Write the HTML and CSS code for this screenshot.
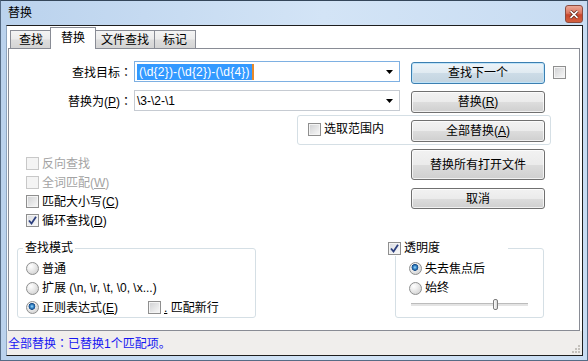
FILE: index.html
```html
<!DOCTYPE html>
<html>
<head>
  <meta charset="utf-8">
  <link rel="stylesheet" href="styles.css">
</head>
<body>
  <div class="window">
    <div class="titlebar">
      <span class="title">替换</span>
      <span class="close">
        <svg width="10" height="9" viewBox="0 0 10 9">
          <path d="M1.5 1.2 L8.5 7.8 M8.5 1.2 L1.5 7.8" stroke="#5c2418" stroke-width="3.2" fill="none"/>
          <path d="M1.5 1.2 L8.5 7.8 M8.5 1.2 L1.5 7.8" stroke="#fff" stroke-width="1.6" fill="none"/>
        </svg>
      </span>
    </div>

    <div class="client">
      <div class="tabs">
        <span class="tab">查找</span>
        <span class="tab active">替换</span>
        <span class="tab wide">文件查找</span>
        <span class="tab">标记</span>
      </div>

      <div class="panel">
        <div class="row">
          <span class="field-label">查找目标<span class="colon">：</span></span>
          <div class="combo focus">
            <span class="combo-text"><span class="sel">(\d{2})-(\d{2})-(\d{4})</span><span class="caret"></span></span>
            <svg class="arrow" width="7" height="4" viewBox="0 0 7 4"><path d="M0 0 H7 L3.5 4 Z" fill="#000"/></svg>
          </div>
          <button class="btn default">查找下一个</button>
          <span class="check"></span>
        </div>

        <div class="row">
          <span class="field-label">替换为(<u>P</u>)<span class="colon">：</span></span>
          <div class="combo">
            <span class="combo-text">\3-\2-\1</span>
            <svg class="arrow" width="7" height="4" viewBox="0 0 7 4"><path d="M0 0 H7 L3.5 4 Z" fill="#000"/></svg>
          </div>
          <button class="btn">替换(<u>R</u>)</button>
        </div>

        <div class="scope">
          <div class="option"><span class="check"></span>选取范围内</div>
          <button class="btn">全部替换(<u>A</u>)</button>
        </div>

        <div class="middle">
          <div class="options">
            <div class="option disabled"><span class="check"></span>反向查找</div>
            <div class="option disabled"><span class="check"></span>全词匹配(<u>W</u>)</div>
            <div class="option"><span class="check"></span>匹配大小写(<u>C</u>)</div>
            <div class="option"><span class="check on"><svg width="11" height="11" viewBox="0 0 11 11"><path d="M2 5.5 L4.5 8.5 L9 1.8" stroke="#2c3f7e" stroke-width="1.8" fill="none"/></svg></span>循环查找(<u>D</u>)</div>
          </div>
          <div class="actions">
            <button class="btn tall">替换所有打开文件</button>
            <button class="btn cancel">取消</button>
          </div>
        </div>

        <div class="groups">
          <fieldset class="group mode">
            <legend>查找模式</legend>
            <div class="option"><span class="radio"></span>普通</div>
            <div class="option wide-row"><span class="radio"></span>扩展 (\n, \r, \t, \0, \x...)</div>
            <div class="option"><span class="radio on"></span><span class="regex">正则表达式(<u>E</u>)</span><span class="check"></span><u>.</u>&nbsp;匹配新行</div>
          </fieldset>

          <fieldset class="group opacity">
            <legend><span class="check on"><svg width="11" height="11" viewBox="0 0 11 11"><path d="M2 5.5 L4.5 8.5 L9 1.8" stroke="#2c3f7e" stroke-width="1.8" fill="none"/></svg></span>透明度</legend>
            <div class="option"><span class="radio on"></span>失去焦点后</div>
            <div class="option wide-row"><span class="radio"></span>始终</div>
            <div class="slider"><span class="thumb"></span></div>
          </fieldset>
        </div>
      </div>

      <div class="statusbar">
        <span>全部替换<span class="colon">：</span>已替换1个匹配项。</span>
        <svg class="grip" width="9" height="9" viewBox="0 0 9 9">
          <rect x="7" y="1" width="2" height="2" fill="#c4c1bc"/>
          <rect x="4" y="4" width="2" height="2" fill="#c4c1bc"/>
          <rect x="7" y="4" width="2" height="2" fill="#c4c1bc"/>
          <rect x="1" y="7" width="2" height="2" fill="#c4c1bc"/>
          <rect x="4" y="7" width="2" height="2" fill="#c4c1bc"/>
          <rect x="7" y="7" width="2" height="2" fill="#c4c1bc"/>
        </svg>
      </div>
    </div>
  </div>
</body>
</html>
```

FILE: styles.css
```css
* {
  box-sizing: border-box;
}

body {
  margin: 0;
  font-family: "Liberation Sans", "Noto Sans CJK SC", sans-serif;
  font-size: 12px;
  line-height: 16px;
  color: #000;
}

u {
  text-decoration: underline;
}

.colon {
  font-family: "Noto Sans CJK JP", sans-serif;
}

.window {
  width: 588px;
  height: 361px;
  border: 1px solid #566c86;
  border-top-color: #34465a;
  background: linear-gradient(to right, #bad2ed, #d3e4f6 55%, #c8dcf2);
  display: flex;
  flex-direction: column;
}

.titlebar {
  height: 24px;
  display: flex;
  align-items: center;
  padding-left: 7px;
}

.title {
  flex: 1;
}

.close {
  align-self: flex-start;
  margin-top: 4px;
  margin-right: 4px;
  width: 18px;
  height: 18px;
  border: 1px solid #8b4c40;
  border-radius: 3px;
  background: linear-gradient(#eba897, #dc765f 45%, #c8462c 55%, #d3603f);
  display: flex;
  align-items: center;
  justify-content: center;
}

.client {
  margin: 0 4px 0 5px;
  height: 331px;
  border: 1px solid #1e1e1e;
  border-left-color: #8ea5bf;
  background: #fff;
  display: flex;
  flex-direction: column;
}

/* tabs */
.tabs {
  height: 22px;
  display: flex;
  align-items: flex-end;
  padding-left: 3px;
}

.tab {
  height: 18px;
  padding: 0 8px;
  margin-left: -1px;
  border: 1px solid #898c95;
  border-bottom: 0;
  background: linear-gradient(#f4f4f4, #ececec 45%, #dddddd 55%, #d4d4d4);
  display: flex;
  align-items: center;
}

.tab:first-child {
  margin-left: 0;
}

.tab.wide {
  padding: 0 5px;
}

.tab.active {
  position: relative;
  height: 22px;
  margin-bottom: -1px;
  margin-left: -2px;
  padding: 0 10px 2px;
  background: #fff;
}

.panel {
  margin-left: 1px;
  width: 572px;
  height: 283px;
  border: 1px solid #898c95;
  display: flex;
  flex-direction: column;
}

/* top rows */
.row {
  display: flex;
  align-items: flex-start;
  margin-top: 12px;
}

.row + .row {
  margin-top: 6px;
}

.field-label {
  width: 123px;
  text-align: right;
  line-height: 21px;
}

.combo {
  margin-left: 2px;
  width: 266px;
  height: 21px;
  border: 1px solid #c6cbd2;
  display: flex;
  align-items: center;
  padding: 0 6px 0 2px;
}

.combo.focus {
  border-color: #7eb0e2;
}

.combo-text {
  flex: 1;
  display: flex;
  align-items: center;
}

.sel {
  background: #3399ff;
  color: #fff;
  padding: 0 2px;
  letter-spacing: 0.2px;
}

.caret {
  width: 2px;
  height: 16px;
  background: #e8892a;
}

.btn {
  font: inherit;
  color: #000;
  margin: 1px 0 0 11px;
  padding: 0;
  width: 134px;
  height: 22px;
  border: 1px solid #707070;
  border-radius: 3px;
  background: linear-gradient(#f2f2f2, #ebebeb 50%, #dddddd 50%, #cfcfcf);
  box-shadow: inset 0 0 0 1px rgba(255, 255, 255, 0.7);
}

.btn.default {
  border-color: #3c7fb1;
  background: linear-gradient(#edf4f9, #e0eaf1 50%, #cddce7 50%, #c3d4e0);
  box-shadow: inset 0 0 0 1px #bfe3f8;
}

.row .check {
  margin-left: 8px;
  align-self: center;
}

/* scope box */
.scope {
  margin: 2px 0 0 288px;
  width: 254px;
  height: 30px;
  border: 1px solid #d5dfe5;
  border-radius: 3px;
  display: flex;
  align-items: flex-start;
  padding: 3px 5px 0 10px;
}

.scope .option {
  margin-top: 2px;
  height: 16px;
}

.scope .btn {
  margin-left: auto;
}

/* checkboxes and radios */
.option {
  display: flex;
  align-items: center;
  height: 19px;
  white-space: nowrap;
}

.option.disabled {
  color: #a3a3a3;
}

.check {
  flex: none;
  width: 13px;
  height: 13px;
  margin-right: 3px;
  border: 1px solid #8f8f8f;
  background: linear-gradient(135deg, #cfd0d2, #f9f9f9);
  box-shadow: inset 0 0 0 1px #f4f4f4;
  display: flex;
  align-items: center;
  justify-content: center;
}

.disabled .check {
  border-color: #c8c8c8;
  background: #f4f4f4;
}

.check.on {
  background: linear-gradient(135deg, #d9dbe0, #fbfbfb);
}

.radio {
  flex: none;
  width: 13px;
  height: 13px;
  margin-right: 3px;
  border: 1px solid #8e8f8f;
  border-radius: 50%;
  background: radial-gradient(circle at 35% 30%, #fff 0, #eeeeee 35%, #c9c9c9 100%);
}

.radio.on {
  background:
    radial-gradient(circle at 45% 40%, #a4dcfb 0, #3b8ccd 1.6px, #164a86 3.1px, transparent 3.7px),
    radial-gradient(circle at 35% 30%, #fff 0, #eeeeee 35%, #c9c9c9 100%);
}

/* middle area */
.middle {
  display: flex;
  align-items: flex-start;
}

.options {
  margin: 9px 0 0 17px;
}

.actions {
  margin: 0 34px 0 auto;
  padding-top: 4px;
  display: flex;
  flex-direction: column;
}

.actions .btn {
  margin: 0;
}

.btn.tall {
  height: 31px;
}

.btn.cancel {
  margin-top: 8px;
  height: 21px;
}

/* group boxes */
.groups {
  display: flex;
  margin: 10px 0 0 8px;
}

.group {
  margin: 0;
  min-width: 0;
  border: 1px solid #d5dfe5;
  border-radius: 3px;
  padding: 3px 0 0 8px;
}

.group legend {
  padding: 0 2px;
  margin-left: -3px;
  line-height: 16px;
}

.option.wide-row {
  height: 20px;
}

.mode {
  width: 239px;
}

.regex {
  width: 106px;
}

.opacity {
  width: 149px;
  margin-left: 139px;
  padding-left: 13px;
}

.opacity legend {
  display: flex;
  align-items: center;
  width: 120px;
  padding: 0;
  margin-left: -21px;
}

.slider {
  margin-left: 2px;
  width: 117px;
  height: 12px;
  display: flex;
  align-items: center;
  background: linear-gradient(transparent 5px, #bcbcbc 5px, #bcbcbc 6px, #e4e4e4 6px, #e4e4e4 8px, transparent 8px);
}

.thumb {
  margin-left: 82px;
  width: 5px;
  height: 11px;
  border: 1px solid #7c7c7c;
  border-radius: 2px;
  background: linear-gradient(to right, #fdfdfd, #d8d8d8);
}

/* status bar */
.statusbar {
  height: 24px;
  background: #f0eeec;
  color: #1616f2;
  padding-left: 1px;
  display: flex;
  align-items: center;
}

.grip {
  margin: auto 2px 2px auto;
}
```
